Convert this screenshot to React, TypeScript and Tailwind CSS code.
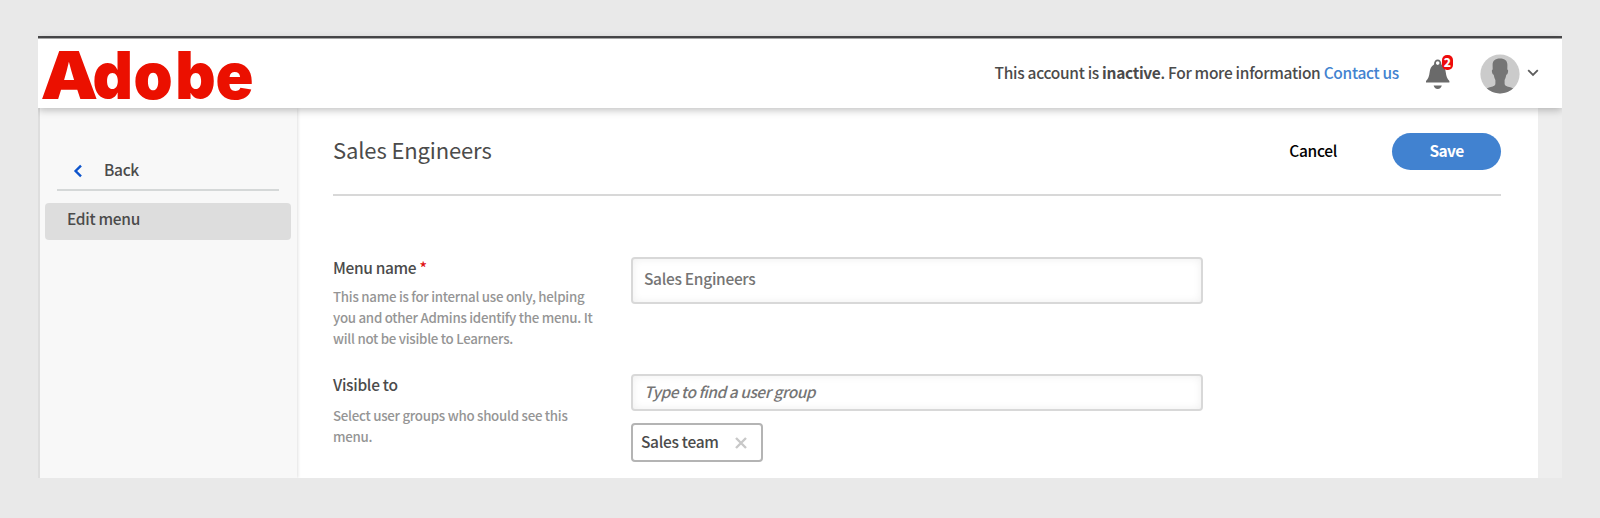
import React from "react";

function AdobeLogo() {
  return (
    <svg width="216" height="69" viewBox="0 0 216 69" role="img" aria-label="Adobe" className="block overflow-visible">
      <g fill="#eb1000" style={{ fontFamily: "Inter, sans-serif", fontWeight: 900, fontSize: 66 }}>
        <text transform="translate(0.500 59.500) scale(1.1 1)">A</text>
        <text transform="translate(0 59.500) scale(0.950 1)" x="55.300 98.500 142.300 184.800">
          dobe
        </text>
      </g>
    </svg>
  );
}

function BellIcon() {
  return (
    <svg width="26" height="32" viewBox="0 0 26 32" className="block">
      <path
        fill="#6a6a6a"
        fillRule="evenodd"
        d="M1 24.400v-1.400c2.300-2 3.200-4.800 3.600-8.400.4-4 1.500-6.600 4.400-8.200C9.100 3.200 10.500 1.400 12.700 1.400s3.600 1.800 3.700 5c2.900 1.600 4 4.200 4.400 8.200.4 3.600 1.300 6.400 3.600 8.400v1.400zM12.700 3.300a1.800 1.800 0 1 0 0 3.600 1.800 1.800 0 0 0 0-3.600z"
      />
      <path fill="#6a6a6a" d="M8.600 27.500h8.200c-.4 2-2 3.400-4.100 3.400s-3.700-1.400-4.100-3.400z" />
    </svg>
  );
}

function Avatar() {
  return (
    <svg width="40" height="40" viewBox="0 0 40 40" className="block">
      <defs>
        <clipPath id="avatar-circle">
          <circle cx="20" cy="20" r="19.600" />
        </clipPath>
      </defs>
      <circle cx="20" cy="20" r="19.600" fill="#cbcbcb" />
      <path
        clipPath="url(#avatar-circle)"
        fill="#757575"
        d="M20 4.600c5 0 7.400 2.200 7.400 6.400l-.1 4.500c1.200.2 1 2.500.2 4.200-.3.700-.8 1-1.200 1.100-.4 2.100-1 3.900-1.700 5.200v3.500c0 2.600 2.900 3 5.600 3.700 2.200.6 3.500 1.200 4.500 2.800L30 41H10l-4.700-5c1-1.600 2.300-2.200 4.500-2.800 2.700-.7 5.600-1.100 5.600-3.700V26c-.7-1.300-1.300-3.100-1.700-5.200-.4-.1-.9-.4-1.200-1.100-.8-1.700-1-4 .2-4.200L12.600 11c0-4.200 2.400-6.400 7.400-6.400z"
      />
    </svg>
  );
}

function Header() {
  return (
    <header className="relative z-10 flex h-[70px] shrink-0 items-center border-t border-[#a6a6a6] bg-white pl-[2px] pr-[23px] shadow-[0_2px_8px_rgba(0,0,0,0.26)]">
      <AdobeLogo />
      <p className="mb-[3px] ml-auto text-[15.5px] font-medium leading-6 tracking-[-0.31px] text-[#4b4b4b]">
        This account is <b className="font-bold">inactive</b>. For more information{" "}
        <a className="text-[#4383d0]">Contact us</a>
      </p>
      <div className="relative ml-[26px]">
        <BellIcon />
        <span className="absolute left-[17px] top-[-3px] flex h-[15px] w-[11px] items-center justify-center rounded-[5px] bg-[#ee0b0b] text-[12px] font-black leading-none text-white">
          2
        </span>
      </div>
      <div className="ml-[29px]">
        <Avatar />
      </div>
      <svg width="12" height="8" viewBox="0 0 12 8" className="mb-px ml-[7px] block">
        <path d="M1.200 1.200 6 6l4.800-4.800" fill="none" stroke="#5c5c5c" strokeWidth="1.800" />
      </svg>
    </header>
  );
}

function Sidebar() {
  return (
    <aside className="relative w-[259px] shrink-0 border-l-2 border-[#dedede] bg-[#f8f8f8] pl-[5px] pr-[6px] pt-[48px] shadow-[1px_0_3px_rgba(0,0,0,0.12)]">
      <div className="ml-[12px] mr-[12px] flex h-[35px] items-start border-b-2 border-[#d5d8d8] pl-[16px]">
        <svg width="10" height="14" viewBox="0 0 10 14" className="mt-[8px] block">
          <path d="M8 1.600 2.600 7 8 12.400" fill="none" stroke="#0d54cc" strokeWidth="2.400" />
        </svg>
        <span className="ml-[21px] mt-px text-[15.5px] font-medium leading-6 tracking-[-0.3px] text-[#4b4b4b]">Back</span>
      </div>
      <div className="mt-[12px] h-[37px] rounded-[4px] bg-[#dddddd] pl-[22px] pt-[3px] text-[15.5px] font-medium leading-6 tracking-[-0.3px] text-[#4b4b4b]">
        Edit menu
      </div>
    </aside>
  );
}

function Editor() {
  return (
    <main className="flex-1 bg-white pl-[36px] pr-[37px]">
      <div className="flex h-[88px] items-start border-b-2 border-[#d8d8d8] pt-[25px]">
        <h1 className="text-[22px] leading-8 tracking-[-0.13px] text-[#4b4b4b]">Sales Engineers</h1>
        <button className="ml-auto mt-[5px] text-[15.5px] font-medium leading-6 tracking-[-0.3px] text-black">Cancel</button>
        <button className="ml-[55px] h-[37px] w-[109px] rounded-full bg-[#4182d0] pb-[3px] text-[15.5px] font-bold leading-6 tracking-[-0.6px] text-white">
          Save
        </button>
      </div>

      <section className="flex h-[117px] pt-[61px]">
        <div className="-mt-[2px] w-[298px] shrink-0">
          <h2 className="text-[15.5px] font-medium leading-6 tracking-[-0.35px] text-[#4b4b4b]">
            Menu name <span className="text-[#e01010]">*</span>
          </h2>
          <p className="mt-[7px] whitespace-nowrap text-[13.3px] font-medium leading-[21px] tracking-[-0.27px] text-[#959595]">
            This name is for internal use only, helping
            <br />
            you and other Admins identify the menu. It
            <br />
            will not be visible to Learners.
          </p>
        </div>
        <div className="flex h-[47px] w-[572px] shrink-0 items-center rounded-[4px] border-2 border-[#d8d8d8] pb-[3px] pl-[11px] text-[15.5px] font-medium tracking-[-0.3px] text-[#757575] shadow-[inset_0_0_8px_rgba(0,0,0,0.07)]">
          Sales Engineers
        </div>
      </section>

      <section className="mt-[61px] flex">
        <div className="-mt-[2px] w-[298px] shrink-0">
          <h2 className="text-[15.5px] font-medium leading-6 tracking-[-0.3px] text-[#4b4b4b]">Visible to</h2>
          <p className="mt-[9px] whitespace-nowrap text-[13.3px] font-medium leading-[21px] tracking-[-0.27px] text-[#959595]">
            Select user groups who should see this
            <br />
            menu.
          </p>
        </div>
        <div className="w-[572px] shrink-0">
          <div className="flex h-[37px] items-center rounded-[4px] border-2 border-[#d8d8d8] pb-px pl-[11px] text-[15.5px] font-medium italic tracking-[-0.48px] text-[#757575] shadow-[inset_0_0_8px_rgba(0,0,0,0.07)]">
            Type to find a user group
          </div>
          <div className="mt-[12px] flex h-[39px] w-[132px] items-center rounded-[4px] border-2 border-[#b4b4b4] pb-[2px] pl-[8px] text-[15.5px] font-medium tracking-[-0.3px] text-[#4b4b4b]">
            Sales team
            <svg width="12" height="12" viewBox="0 0 12 12" className="ml-[16px] mt-[2px] block">
              <path d="M1 1l10 10M11 1 1 11" fill="none" stroke="#c8c8c8" strokeWidth="2.400" />
            </svg>
          </div>
        </div>
      </section>
    </main>
  );
}

export default function App() {
  return (
    <div className="h-[518px] w-[1600px] overflow-hidden bg-[#e9e9e9] pl-[38px] pt-[36px] font-['Noto_Sans_CJK_SC','Source_Sans_Pro',sans-serif]">
      <div className="flex h-[442px] w-[1524px] flex-col overflow-x-clip border-t-2 border-[#4a4a4c] bg-[#eeeeee]">
        <Header />
        <div className="flex min-h-0 w-[1500px] flex-1 overflow-hidden">
          <Sidebar />
          <Editor />
        </div>
      </div>
    </div>
  );
}
